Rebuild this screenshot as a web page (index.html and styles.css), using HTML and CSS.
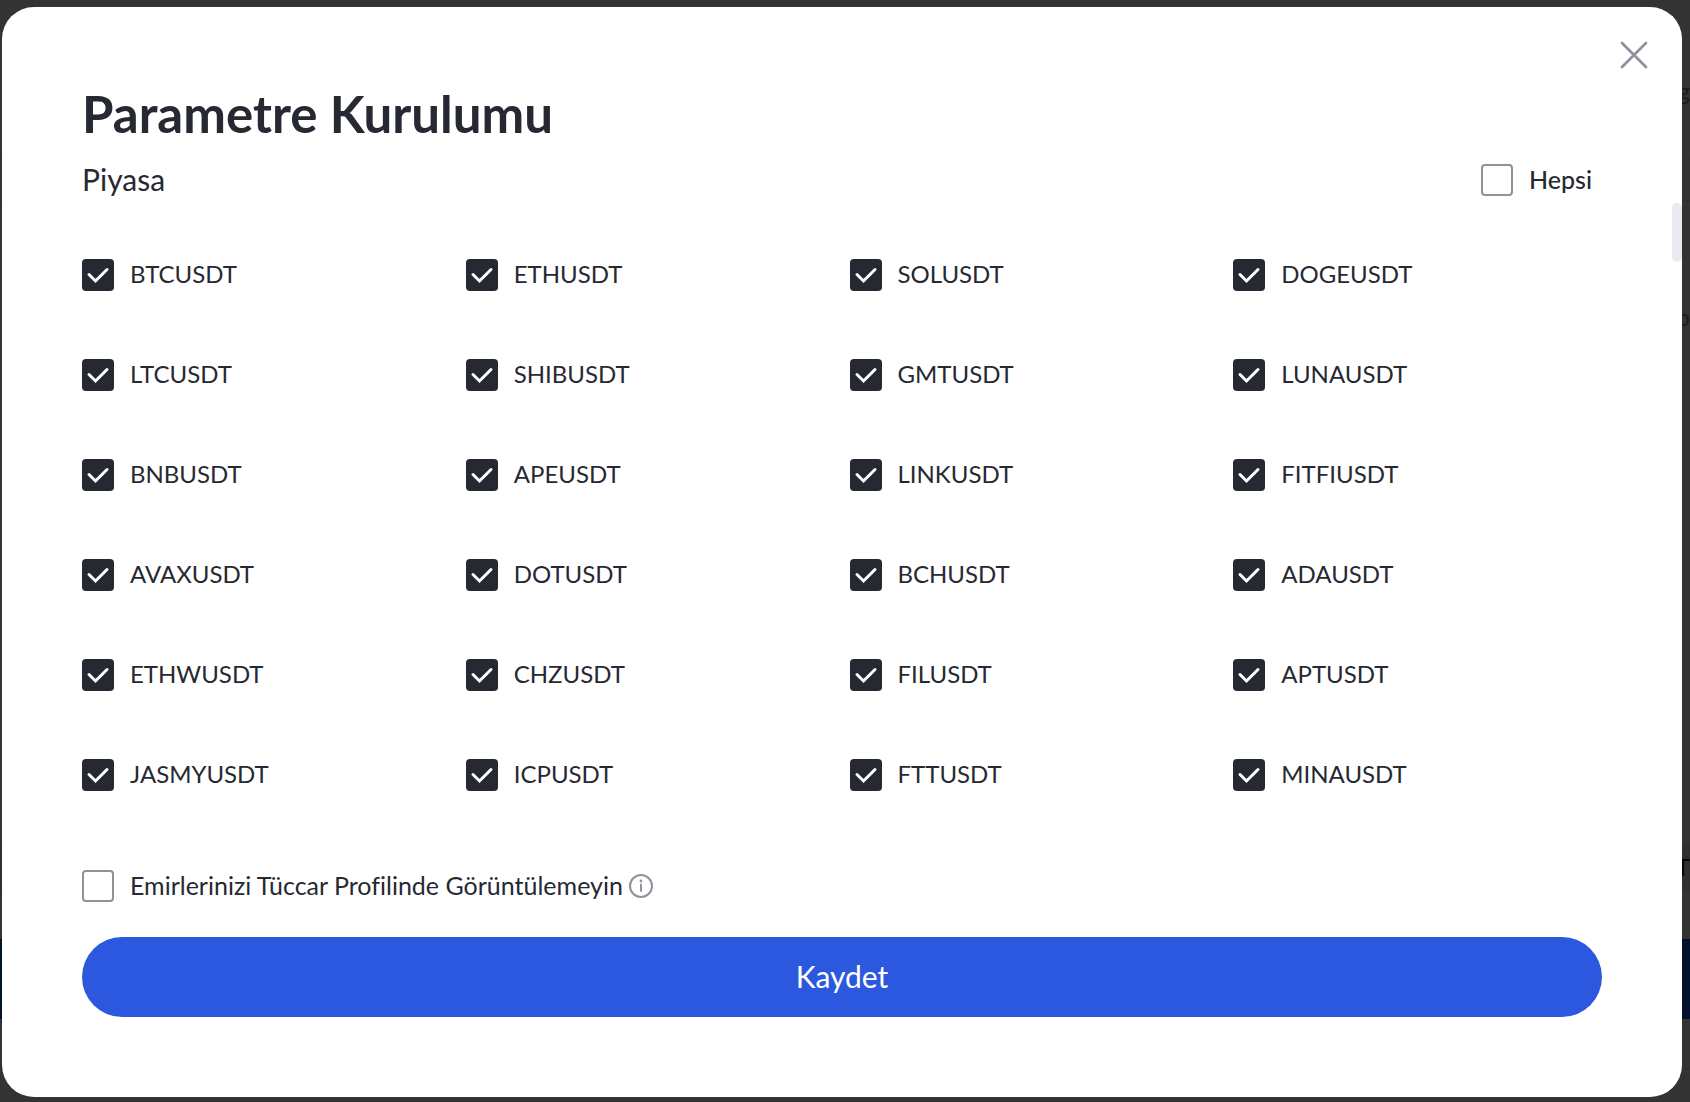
FILE: index.html
```
<!DOCTYPE html>
<html lang="tr">
<head>
    <meta charset="UTF-8">
    <meta name="viewport" content="width=device-width, initial-scale=1.0">
    <title>Parametre Kurulumu</title>
    <link rel="stylesheet" href="styles.css">
</head>
<body>

    <!-- page behind the dialog -->
    <div class="page">
        <div class="page-head">g</div>
        <div class="page-line"></div>
        <div class="page-info">p</div>
        <div class="page-pair">T</div>
        <div class="page-band"></div>
        <div class="page-foot"></div>
    </div>

    <div class="overlay">
        <div class="modal" role="dialog" aria-labelledby="modal-title">
            <button class="close" type="button" aria-label="Kapat">
                <svg viewBox="0 0 28 28" width="28" height="28"><path d="M2 2 L26 26 M26 2 L2 26"/></svg>
            </button>
            <div class="scroll-thumb"></div>

            <h1 class="title" id="modal-title">Parametre Kurulumu</h1>
            <div class="market">
                <h2 class="market-title">Piyasa</h2>
                <label class="check all"><input type="checkbox">Hepsi</label>
            </div>

            <form class="form">
                <div class="pairs">
                    <label class="check"><input type="checkbox" checked>BTCUSDT</label>
                    <label class="check"><input type="checkbox" checked>ETHUSDT</label>
                    <label class="check"><input type="checkbox" checked>SOLUSDT</label>
                    <label class="check"><input type="checkbox" checked>DOGEUSDT</label>
                    <label class="check"><input type="checkbox" checked>LTCUSDT</label>
                    <label class="check"><input type="checkbox" checked>SHIBUSDT</label>
                    <label class="check"><input type="checkbox" checked>GMTUSDT</label>
                    <label class="check"><input type="checkbox" checked>LUNAUSDT</label>
                    <label class="check"><input type="checkbox" checked>BNBUSDT</label>
                    <label class="check"><input type="checkbox" checked>APEUSDT</label>
                    <label class="check"><input type="checkbox" checked>LINKUSDT</label>
                    <label class="check"><input type="checkbox" checked>FITFIUSDT</label>
                    <label class="check"><input type="checkbox" checked>AVAXUSDT</label>
                    <label class="check"><input type="checkbox" checked>DOTUSDT</label>
                    <label class="check"><input type="checkbox" checked>BCHUSDT</label>
                    <label class="check"><input type="checkbox" checked>ADAUSDT</label>
                    <label class="check"><input type="checkbox" checked>ETHWUSDT</label>
                    <label class="check"><input type="checkbox" checked>CHZUSDT</label>
                    <label class="check"><input type="checkbox" checked>FILUSDT</label>
                    <label class="check"><input type="checkbox" checked>APTUSDT</label>
                    <label class="check"><input type="checkbox" checked>JASMYUSDT</label>
                    <label class="check"><input type="checkbox" checked>ICPUSDT</label>
                    <label class="check"><input type="checkbox" checked>FTTUSDT</label>
                    <label class="check"><input type="checkbox" checked>MINAUSDT</label>
                </div>

                <div class="hide-orders">
                    <label class="check"><input type="checkbox">Emirlerinizi Tüccar Profilinde Görüntülemeyin</label>
                    <svg class="info" viewBox="0 0 24 24" width="24" height="24">
                        <circle class="ring" cx="12" cy="12" r="11"/>
                        <circle class="dot" cx="12" cy="7" r="1.4"/>
                        <path d="M12 10.5 V17"/>
                    </svg>
                </div>

                <button class="save" type="submit">Kaydet</button>
            </form>
        </div>
    </div>

</body>
</html>
```

FILE: styles.css
```
*{
    margin: 0;
    padding: 0;
    box-sizing: border-box;
}
body{
    font-family: Lato, "Noto Sans", sans-serif;
    color: #262932;
    background-color: #333333;
}
.page{
    height: 100vh;
    overflow: hidden;
    display: flex;
    flex-direction: column;
    text-align: right;
    font-size: 24px;
    line-height: 32px;
    color: #1c1c1c;
}
.page-head{
    height: 158px;
    padding-top: 75px;
}
.page-line{
    height: 43px;
    border-top: 1px solid #2e2e2e;
    border-bottom: 1px solid #2e2e2e;
}
.page-info{
    height: 644px;
    padding-top: 100px;
}
.page-pair{
    height: 46px;
    padding-top: 6px;
    color: #050505;
    background-color: #2f2f2f;
}
.page-band{
    height: 80px;
    margin-top: 48px;
    background-color: #03112f;
}
.page-foot{
    height: 50px;
    border-bottom: 1px solid #2e2e2e;
}
.overlay{
    position: fixed;
    top: 0;
    left: 0;
    width: 100%;
    height: 100%;
    padding: 7px 8px 5px 2px;
}
.modal{
    position: relative;
    width: 100%;
    padding: 80px;
    background-color: #fff;
    border-radius: 32px;
    overflow: hidden;
}
.close{
    position: absolute;
    top: 34px;
    right: 34px;
    width: 28px;
    height: 28px;
    border: none;
    background: none;
    cursor: pointer;
}
.close svg{
    display: block;
    fill: none;
    stroke: #8f929c;
    stroke-width: 2.8;
    stroke-linecap: round;
}
.scroll-thumb{
    position: absolute;
    top: 196px;
    right: 0;
    width: 10px;
    height: 59px;
    border-radius: 5px;
    background-color: #e9eaf0;
}
.title{
    font-size: 51px;
    line-height: 54px;
    font-weight: 700;
}
.market{
    display: flex;
    justify-content: space-between;
    align-items: flex-start;
    height: 32px;
    margin-top: 23px;
    padding-right: 10px;
}
.market-title{
    font-size: 30px;
    line-height: 30px;
    font-weight: 400;
}
.check{
    display: flex;
    align-items: flex-start;
    gap: 16px;
    font-size: 25px;
    line-height: 30px;
    cursor: pointer;
}
.all{
    font-weight: 500;
}
.check input{
    appearance: none;
    flex-shrink: 0;
    width: 32px;
    height: 32px;
    border: 2px solid #8f929c;
    border-radius: 4px;
    cursor: pointer;
}
.check input:checked{
    border: none;
    background: #262932 url("data:image/svg+xml,%3Csvg xmlns='http://www.w3.org/2000/svg' viewBox='0 0 32 32'%3E%3Cpath d='M7 15.5 L13.5 22 L25 10.5' fill='none' stroke='white' stroke-width='3' stroke-linecap='round' stroke-linejoin='miter'/%3E%3C/svg%3E") center / 32px 32px;
}
.pairs{
    display: grid;
    grid-template-columns: repeat(4, 1fr);
    column-gap: 15px;
    row-gap: 68px;
    margin-top: 63px;
}
.pairs .check{
    font-size: 24px;
}
.hide-orders{
    display: flex;
    align-items: center;
    gap: 6px;
    margin-top: 79px;
}
.info{
    fill: none;
    stroke: #8f929c;
    stroke-width: 2;
    stroke-linecap: round;
}
.info .dot{
    fill: #8f929c;
    stroke: none;
}
.save{
    display: block;
    width: 100%;
    height: 80px;
    margin-top: 35px;
    padding-bottom: 2px;
    border: none;
    border-radius: 40px;
    background-color: #2b58de;
    color: #fff;
    font-family: inherit;
    font-size: 30px;
    line-height: 32px;
    cursor: pointer;
}
```
